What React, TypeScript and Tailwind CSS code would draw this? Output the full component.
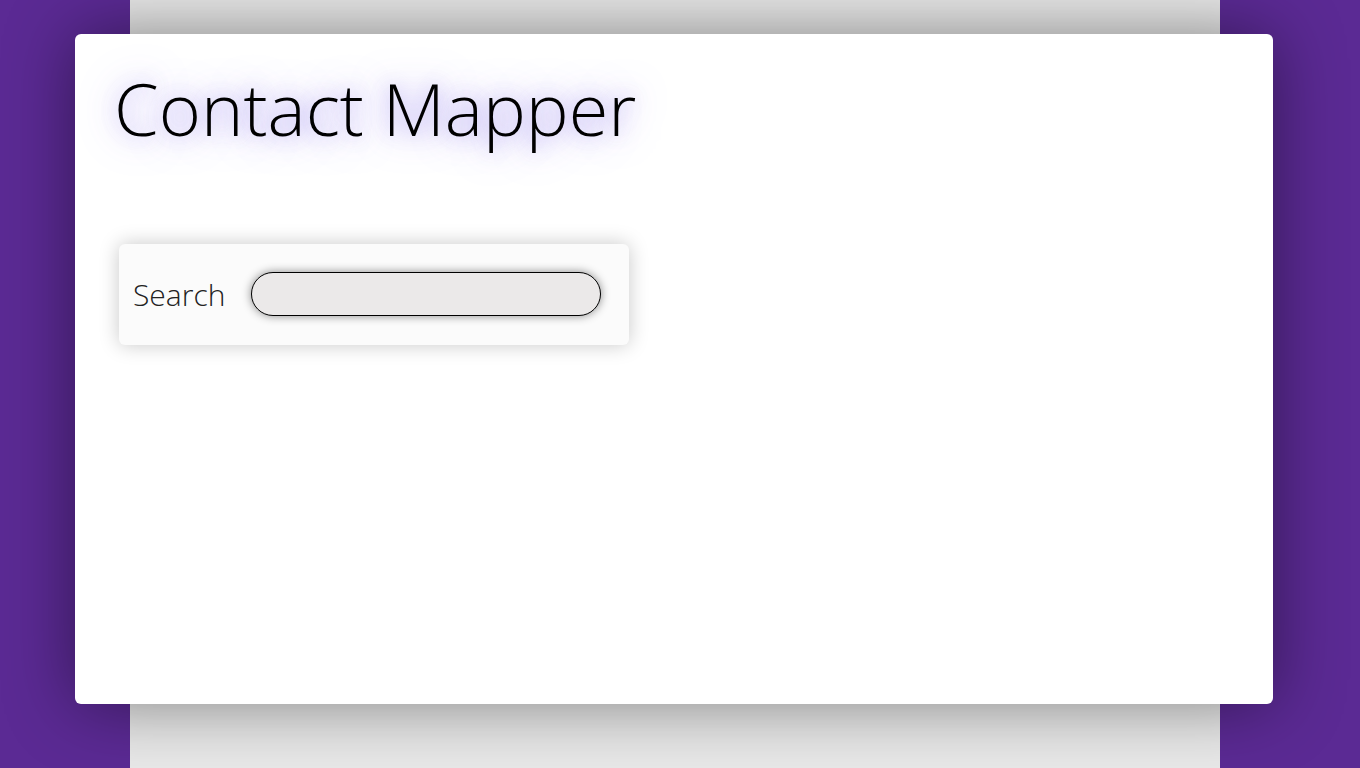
import React from "react";

export default function App() {
  return (
    <div
      className="min-h-[768px] w-full bg-[#5b2a94] flex justify-center"
      style={{ fontFamily: '"Open Sans", sans-serif' }}
    >
      <div className="w-[1090px] ml-[-10px] min-h-[768px] bg-[#e9e9e9] flex justify-center pt-[34px]">
        <div className="shrink-0 ml-[-2px] w-[1198px] h-[670px] bg-white rounded-[6px] shadow-[0_0_70px_rgba(0,0,0,0.45)] pl-[39px] pr-[40px] pt-[38px] relative">
          <h1
            className="text-[72px] font-light leading-none text-black m-0 [text-shadow:0_0_36px_rgba(95,65,230,0.6),0_0_18px_rgba(120,100,230,0.3)]"
          >
            Contact Mapper
          </h1>
          <div className="mt-[100px] ml-[5px] w-[510px] h-[101px] bg-[#fbfbfb] rounded-[6px] shadow-[0_0_20px_rgba(0,0,0,0.22)] flex items-center pl-[14px]">
            <label className="text-[30px] font-light text-[#222] leading-none">Search</label>
            <input
              type="text"
              className="ml-[26px] mb-[2px] w-[350px] h-[44px] rounded-full border border-black bg-[#ebe9e9] shadow-[0_0_10px_rgba(0,0,0,0.45)] outline-none"
            />
          </div>
        </div>
      </div>
    </div>
  );
}
